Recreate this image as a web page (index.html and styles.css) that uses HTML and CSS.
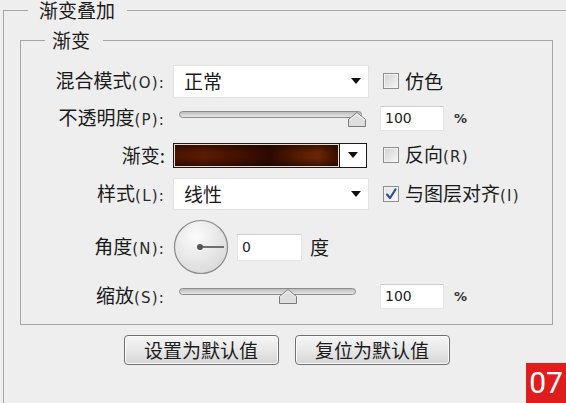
FILE: index.html
```html
<!DOCTYPE html>
<html lang="zh-CN">
<head>
<meta charset="utf-8">
<title>渐变叠加</title>
<link rel="stylesheet" href="styles.css">
</head>
<body>
<fieldset class="outer">
  <legend class="legend-outer">渐变叠加</legend>
  <fieldset class="inner">
    <legend class="legend-inner">渐变</legend>
    <div class="form">
      <div class="lbl">混合模式<span class="lat">(O):</span></div>
      <div class="select select-1"><span>正常</span><i class="caret"></i></div>
      <div class="check"><span class="box"></span><span>仿色</span></div>

      <div class="lbl">不透明度<span class="lat">(P):</span></div>
      <div class="slider slider-long"><div class="track"></div>
        <svg class="thumb" style="left:168px" width="20" height="16" viewBox="0 0 20 16"><path d="M1.5 15.5 V8.5 L10 1.5 L18.5 8.5 V15.5 Z" fill="#dedede" stroke="#7a7a7a" stroke-width="1"/><path d="M2.5 9 L10 2.8 L17.5 9" fill="none" stroke="#fafafa" stroke-width="1"/></svg>
      </div>
      <div class="numwrap"><div class="num">100</div><span class="pct">%</span></div>

      <div class="lbl">渐变:</div>
      <div class="grad"><div class="grad-fill"></div><div class="grad-drop"><i class="caret"></i></div></div>
      <div class="check"><span class="box"></span><span>反向<span class="lat">(R)</span></span></div>

      <div class="lbl">样式<span class="lat">(L):</span></div>
      <div class="select select-4"><span>线性</span><i class="caret"></i></div>
      <div class="check"><span class="box checked"><svg width="14" height="14" viewBox="0 0 14 14"><path d="M3 7.5 L6 11 L11.5 2.5" fill="none" stroke="#2d4fa6" stroke-width="2.2" stroke-linecap="round" stroke-linejoin="round"/></svg></span><span>与图层对齐<span class="lat">(I)</span></span></div>

      <div class="lbl">角度<span class="lat">(N):</span></div>
      <div class="angle">
        <svg class="dial" width="56" height="56" viewBox="0 0 56 56">
          <defs><radialGradient id="dg" cx="40%" cy="30%" r="75%"><stop offset="0" stop-color="#fbfbfb"/><stop offset="1" stop-color="#d9d9d9"/></radialGradient></defs>
          <circle cx="28" cy="28" r="26.5" fill="url(#dg)" stroke="#8a8a8a" stroke-width="1.2"/>
          <line x1="27" y1="28" x2="51" y2="28" stroke="#707070" stroke-width="2"/>
          <circle cx="27" cy="28" r="3" fill="#555"/>
        </svg>
        <div class="num num-angle">0</div>
        <span class="deg">度</span>
      </div>
      <div></div>

      <div class="lbl">缩放<span class="lat">(S):</span></div>
      <div class="slider slider-short"><div class="track"></div>
        <svg class="thumb" style="left:99px" width="20" height="16" viewBox="0 0 20 16"><path d="M1.5 15.5 V8.5 L10 1.5 L18.5 8.5 V15.5 Z" fill="#dedede" stroke="#7a7a7a" stroke-width="1"/><path d="M2.5 9 L10 2.8 L17.5 9" fill="none" stroke="#fafafa" stroke-width="1"/></svg>
      </div>
      <div class="numwrap"><div class="num">100</div><span class="pct">%</span></div>
    </div>
  </fieldset>
  <div class="actions">
    <button class="btn">设置为默认值</button>
    <button class="btn">复位为默认值</button>
  </div>
</fieldset>
<div class="badge">07</div>
</body>
</html>
```
FILE: styles.css
```css
html, body {
  margin: 0;
  padding: 0;
  overflow: hidden;
  width: 566px;
  height: 403px;
}
body {
  background: #eeeeee;
  font-family: "Noto Sans CJK SC", "Noto Sans", sans-serif;
  font-size: 19px;
  color: #1a1a1a;
  position: relative;
}
.outer {
  margin: 0 0 0 3px;
  padding: 0;
  width: 620px;
  height: 470px;
  border: 1px solid #a6a6a6;
  min-width: 0;
  box-sizing: border-box;
}
.legend-outer {
  margin-left: 24px;
  padding: 0 12px 0 11px;
  line-height: 20px;
  font-size: 19px;
}
.inner {
  margin: 10px 0 0 16px;
  padding: 0;
  width: 533px;
  border: 1px solid #a6a6a6;
  min-width: 0;
  box-sizing: border-box;
}
.legend-inner {
  margin-left: 24px;
  padding: 0 13px 0 7px;
  line-height: 20px;
  font-size: 19px;
}
.form {
  display: grid;
  grid-template-columns: 144px 196px 1fr;
  grid-template-rows: 38px 37px 36px 42px 64px 34px;
  column-gap: 8px;
  align-items: center;
  padding: 12px 0 11px;
}
.lbl {
  text-align: right;
  white-space: nowrap;
  line-height: 24px;
}
.lat {
  font-family: "DejaVu Sans", sans-serif;
  font-size: 15px;
  letter-spacing: 1.2px;
  color: #2a2a2a;
}
.select {
  background: #ffffff;
  border: 1px solid #e2e2e2;
  box-sizing: border-box;
  display: flex;
  align-items: center;
  justify-content: space-between;
  padding: 0 7px 0 10px;
  line-height: 24px;
}
.select-1 { height: 33px; }
.select-4 { height: 32px; }
.caret {
  display: block;
  width: 0;
  height: 0;
  border-left: 5px solid transparent;
  border-right: 5px solid transparent;
  border-top: 6px solid #111;
}
.check {
  display: flex;
  align-items: center;
  gap: 6px;
  margin-left: 6px;
  white-space: nowrap;
  line-height: 24px;
}
.box {
  width: 16px;
  height: 16px;
  box-sizing: border-box;
  border: 1px solid #8f8f8f;
  background: linear-gradient(135deg, #d2d2d2, #f6f6f6);
  box-shadow: inset 0 0 0 1px #f2f2f2;
  display: flex;
  align-items: center;
  justify-content: center;
}
.box.checked {
  background: linear-gradient(135deg, #e4e4e4, #fbfbfb);
}
.slider {
  position: relative;
  height: 16px;
  margin-left: 6px;
}
.slider-long { margin-right: 7px; }
.slider-short { margin-right: 13px; }
.track {
  height: 7px;
  box-sizing: border-box;
  border: 1px solid #8c8c8c;
  border-radius: 4px;
  background: linear-gradient(#bdbdbd, #e6e6e6);
}
.thumb {
  position: absolute;
  top: 0;
  display: block;
}
.numwrap {
  display: flex;
  align-items: center;
  margin-left: 3px;
}
.num {
  width: 64px;
  height: 25px;
  box-sizing: border-box;
  background: #ffffff;
  border: 1px solid #e4e4e4;
  border-top-color: #cfcfcf;
  font-family: "DejaVu Sans", sans-serif;
  font-size: 14px;
  line-height: 23px;
  padding-left: 4px;
  color: #222;
}
.pct {
  margin-left: 10px;
  font-family: "DejaVu Sans", sans-serif;
  font-size: 13px;
  font-weight: bold;
  color: #333;
}
.grad {
  height: 25px;
  box-sizing: border-box;
  border: 1px solid #1a1a1a;
  display: flex;
  margin-right: 2px;
}
.grad-fill {
  flex: 1;
  border: 1px solid #e9dccd;
  background:
    linear-gradient(rgba(20,4,0,0.55), rgba(20,4,0,0) 35%, rgba(20,4,0,0) 65%, rgba(20,4,0,0.55)),
    linear-gradient(90deg, #4a1300 0%, #5a1a02 18%, #3d0e00 45%, #2e0900 58%, #5a1d03 78%, #6a2406 88%, #3a0d00 100%);
}
.grad-drop {
  width: 26px;
  background: #ffffff;
  border-left: 1px solid #1a1a1a;
  display: flex;
  align-items: center;
  justify-content: center;
}
.angle {
  display: flex;
  align-items: center;
}
.dial { display: block; }
.num-angle {
  width: 65px;
  height: 27px;
  line-height: 25px;
  margin-left: 8px;
}
.deg {
  margin-left: 8px;
  line-height: 24px;
}
.actions {
  width: 533px;
  margin: 10px 0 0 16px;
  display: flex;
  justify-content: center;
  gap: 16px;
}
.btn {
  width: 155px;
  height: 30px;
  box-sizing: border-box;
  border: 1px solid #707070;
  border-radius: 4px;
  background: linear-gradient(#f6f6f6, #e8e8e8 50%, #d6d6d6);
  box-shadow: inset 0 0 0 1px #fbfbfb;
  font-family: "Noto Sans CJK SC", sans-serif;
  font-size: 19px;
  line-height: 26px;
  color: #1c1c1c;
  padding: 0;
}
.badge {
  position: absolute;
  right: 0;
  bottom: 0;
  width: 40px;
  height: 40px;
  background: #e01d1d;
  color: #ffffff;
  font-family: Roboto, "DejaVu Sans", sans-serif;
  font-size: 30px;
  line-height: 40px;
  text-align: center;
}
```
